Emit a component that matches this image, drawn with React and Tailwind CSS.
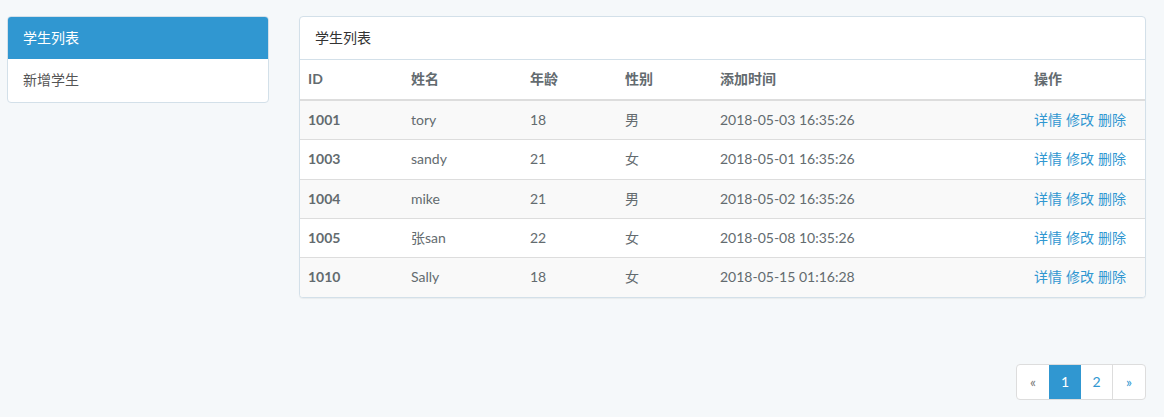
import React from "react";

const students = [
  { id: "1001", name: "tory", age: 18, sex: "男", time: "2018-05-03 16:35:26" },
  { id: "1003", name: "sandy", age: 21, sex: "女", time: "2018-05-01 16:35:26" },
  { id: "1004", name: "mike", age: 21, sex: "男", time: "2018-05-02 16:35:26" },
  { id: "1005", name: "张san", age: 22, sex: "女", time: "2018-05-08 10:35:26" },
  { id: "1010", name: "Sally", age: 18, sex: "女", time: "2018-05-15 01:16:28" },
];

export default function App() {
  return (
    <div
      className="min-h-[417px] bg-[#f5f8fa] text-[14px] text-[#636b6f]"
      style={{ fontFamily: '"Lato", "Noto Sans CJK SC", sans-serif' }}
    >
      <div className="flex gap-[30px] pl-[7px] pr-[18px] pt-4">
        {/* Sidebar */}
        <div className="w-[262px] shrink-0">
          <div className="rounded-[4px] border border-[#d3e0e9] bg-white overflow-hidden">
            <div className="bg-[#3097d1] text-white px-[15px] py-[10px] leading-[22.4px]">学生列表</div>
            <div className="px-[15px] py-[10px] leading-[22.4px] text-[#555]">新增学生</div>
          </div>
        </div>

        {/* Main */}
        <div className="flex-1">
          <div className="rounded-[4px] border border-[#d3e0e9] bg-white overflow-hidden shadow-[0_1px_1px_rgba(0,0,0,0.05)]">
            <div className="px-[15px] py-[10px] leading-[22.4px] border-b border-[#d3e0e9] text-[#333]">学生列表</div>
            <table className="w-full border-collapse text-left">
              <thead>
                <tr className="border-b-2 border-[#ddd]">
                  <th className="w-[103px] px-2 py-2 leading-[22.4px] font-bold">ID</th>
                  <th className="w-[119px] px-2 py-2 leading-[22.4px] font-bold">姓名</th>
                  <th className="w-[95px] px-2 py-2 leading-[22.4px] font-bold">年龄</th>
                  <th className="w-[95px] px-2 py-2 leading-[22.4px] font-bold">性别</th>
                  <th className="w-[314px] px-2 py-2 leading-[22.4px] font-bold">添加时间</th>
                  <th className="px-2 py-2 leading-[22.4px] font-bold">操作</th>
                </tr>
              </thead>
              <tbody>
                {students.map((s, i) => (
                  <tr key={s.id} className={(i % 2 === 0 ? "bg-[#f9f9f9] " : "bg-white ") + (i > 0 ? "border-t border-[#ddd]" : "")}>
                    <td className="px-2 py-2 leading-[22.4px] font-bold">{s.id}</td>
                    <td className="px-2 py-2 leading-[22.4px]">{s.name}</td>
                    <td className="px-2 py-2 leading-[22.4px]">{s.age}</td>
                    <td className="px-2 py-2 leading-[22.4px]">{s.sex}</td>
                    <td className="px-2 py-2 leading-[22.4px]">{s.time}</td>
                    <td className="px-2 py-2 leading-[22.4px] text-[#3097d1] whitespace-nowrap">
                      <a className="mr-1">详情</a>
                      <a className="mr-1">修改</a>
                      <a>删除</a>
                    </td>
                  </tr>
                ))}
              </tbody>
            </table>
          </div>

          {/* Pagination */}
          <div className="flex justify-end mt-[66px]">
            <ul className="flex h-[36px] rounded-[4px] border border-[#ddd] bg-white text-[#3097d1] leading-[34px] overflow-hidden">
              <li className="w-[32px] text-center text-[#777]">«</li>
              <li className="w-[32px] text-center bg-[#3097d1] text-white">1</li>
              <li className="w-[32px] text-center border-r border-[#ddd]">2</li>
              <li className="w-[32px] text-center">»</li>
            </ul>
          </div>
        </div>
      </div>
    </div>
  );
}
